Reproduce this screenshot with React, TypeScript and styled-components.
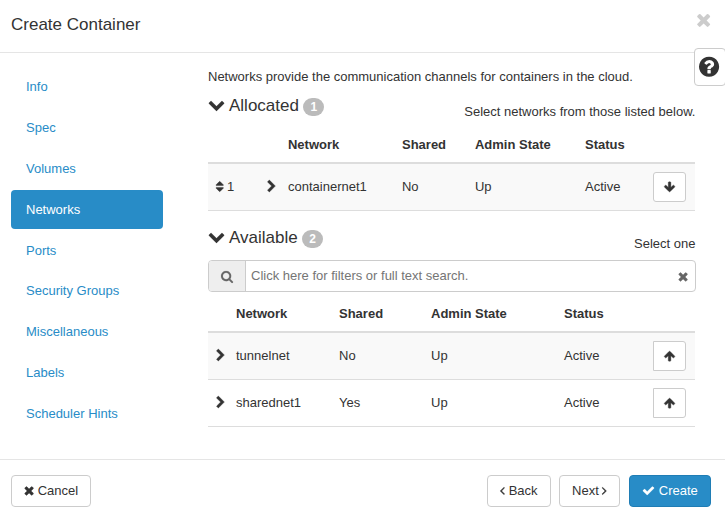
import React from 'react';
import styled, { createGlobalStyle, css } from 'styled-components';

const GlobalStyle = createGlobalStyle`
  *, *::before, *::after { box-sizing: border-box; }
  body {
    margin: 0;
    background: #fff;
    color: #333;
    font: 13px/18px "Liberation Sans", Arial, sans-serif;
    overflow: hidden;
  }
  h3, p { margin: 0; font-weight: 400; }
  button, input { font: inherit; color: inherit; }
`;

/* Glyphs share a 1792-unit em; `w` is the advance width, centred on the em box. */
const glyphs = {
  times: { w: 1408, d: 'M1490 1322q0 40-28 68l-136 136q-28 28-68 28t-68-28l-294-294-294 294q-28 28-68 28t-68-28l-136-136q-28-28-28-68t28-68l294-294-294-294q-28-28-28-68t28-68l136-136q28-28 68-28t68 28l294 294 294-294q28-28 68-28t68 28l136 136q28 28 28 68t-28 68l-294 294 294 294q28 28 28 68z' },
  search: { w: 1664, d: 'M1216 832q0-185-131.5-316.5t-316.5-131.5-316.5 131.5-131.5 316.5 131.5 316.5 316.5 131.5 316.5-131.5 131.5-316.5zm512 832q0 52-38 90t-90 38q-54 0-90-38l-343-342q-179 124-399 124-143 0-273.5-55.5t-225-150-150-225-55.5-273.5 55.5-273.5 150-225 225-150 273.5-55.5 273.5 55.5 225 150 150 225 55.5 273.5q0 220-124 399l343 343q37 37 37 90z' },
  check: { w: 1792, d: 'M1671 566q0 40-28 68l-724 724-136 136q-28 28-68 28t-68-28l-136-136-362-362q-28-28-28-68t28-68l136-136q28-28 68-28t68 28l294 295 656-657q28-28 68-28t68 28l136 136q28 28 28 68z' },
  angleLeft: { w: 640, d: 'M1203 544q0 13-10 23l-393 393 393 393q10 10 10 23t-10 23l-50 50q-10 10-23 10t-23-10l-466-466q-10-10-10-23t10-23l466-466q10-10 23-10t23 10l50 50q10 10 10 23z' },
  angleRight: { w: 640, d: 'M1171 960q0 13-10 23l-466 466q-10 10-23 10t-23-10l-50-50q-10-10-10-23t10-23l393-393-393-393q-10-10-10-23t10-23l50-50q10-10 23-10t23 10l466 466q10 10 10 23z' },
  chevronRight: { w: 1280, d: 'M1363 877l-742 742q-19 19-45 19t-45-19l-166-166q-19-19-19-45t19-45l531-531-531-531q-19-19-19-45t19-45l166-166q19-19 45-19t45 19l742 742q19 19 19 45t-19 45z' },
  chevronDown: { w: 1792, d: 'M1683 808l-742 741q-19 19-45 19t-45-19l-742-741q-19-19-19-45.5t19-45.5l166-165q19-19 45-19t45 19l531 531 531-531q19-19 45-19t45 19l166 165q19 19 19 45.5t-19 45.5z' },
  arrowUp: { w: 1664, d: 'M1675 971q0 51-37 90l-75 75q-38 38-91 38-54 0-90-38l-294-293v704q0 52-37.5 84.5t-90.5 32.5h-128q-53 0-90.5-32.5t-37.5-84.5v-704l-294 293q-36 38-90 38t-90-38l-75-75q-38-38-38-90 0-53 38-91l651-651q35-37 90-37 54 0 91 37l651 651q37 39 37 91z' },
  arrowDown: { w: 1664, d: 'M1675 832q0 53-37 90l-651 652q-39 37-91 37-53 0-90-37l-651-652q-38-36-38-90 0-53 38-91l74-75q39-37 91-37 53 0 90 37l294 294v-704q0-52 38-90t90-38h128q52 0 90 38t38 90v704l294-294q37-37 90-37 52 0 91 37l75 75q37 39 37 91z' },
  help: { w: 1536, d: 'M1024 1376v-192q0-14-9-23t-23-9h-192q-14 0-23 9t-9 23v192q0 14 9 23t23 9h192q14 0 23-9t9-23zm256-672q0-88-55.5-163t-138.5-116-170-41q-243 0-371 213-15 24 8 42l132 100q7 6 19 6 16 0 25-12 53-68 86-92 34-24 86-24 48 0 85.5 26t37.5 59q0 38-20 61t-68 45q-63 28-115.5 86.5t-52.5 125.5v36q0 14 9 23t23 9h192q14 0 23-9t9-23q0-19 21.5-49.5t54.5-49.5q32-18 49-28.5t46-35 44.5-48 28-60.5 12.5-81zm384 192q0 209-103 385.5t-279.5 279.5-385.5 103-385.5-103-279.5-279.5-103-385.5 103-385.5 279.5-279.5 385.5-103 385.5 103 279.5 279.5 103 385.5z' },
  sort: { w: 1024, d: 'M1408 1088q0 26-19 45l-448 448q-19 19-45 19t-45-19l-448-448q-19-19-19-45t19-45 45-19h896q26 0 45 19t19 45zm0-384q0 26-19 45t-45 19h-896q-26 0-45-19t-19-45 19-45l448-448q19-19 45-19t45 19l448 448q19 19 19 45z' },
};

const Glyph = styled.svg<{ $size: number; $w: number; $lift: number; $weight: number }>`
  display: block;
  flex: none;
  height: ${p => p.$size}px;
  width: ${p => (p.$size * p.$w) / 1792}px;
  margin-bottom: ${p => p.$lift * 2}px;
  overflow: visible;
  fill: currentColor;
  stroke: currentColor;
  stroke-width: ${p => p.$weight};
`;

interface IconProps {
  name: keyof typeof glyphs;
  size?: number;
  lift?: number;
  weight?: number;
}

function Icon({ name, size = 13, lift = 0, weight = 60 }: IconProps) {
  const { w, d } = glyphs[name];
  return (
    <Glyph
      $size={size}
      $w={w}
      $lift={lift}
      $weight={weight}
      viewBox={`${(1792 - w) / 2} 0 ${w} 1792`}
      aria-hidden="true"
    >
      <path d={d} />
    </Glyph>
  );
}

const Dialog = styled.div`
  display: flex;
  flex-direction: column;
  width: 725px;
  height: 521px;
  overflow: hidden;
`;

const Header = styled.header`
  display: flex;
  justify-content: space-between;
  height: 53px;
  padding: 10px 14px 0 11px;
  border-bottom: 1px solid #e5e5e5;
`;

const Title = styled.h3`
  padding-top: 3px;
  font-size: 17px;
  line-height: 24px;
`;

const Close = styled.button`
  align-self: flex-start;
  padding: 0;
  border: 0;
  background: none;
  color: #ccc;
`;

const HelpButton = styled.button`
  position: absolute;
  top: 48px;
  left: 694px;
  display: flex;
  align-items: center;
  justify-content: center;
  width: 32px;
  height: 38px;
  padding: 0 1px 0 0;
  border: 1px solid #ccc;
  border-radius: 4px;
  background: #fff;
`;

const Body = styled.div`
  display: flex;
  height: 406px;
`;

const Nav = styled.nav`
  display: flex;
  flex-direction: column;
  gap: 2px;
  width: 163px;
  padding: 14.4px 0 0 11px;
`;

const NavItem = styled.a<{ $active?: boolean }>`
  flex: none;
  height: 38.85px;
  padding: 10.85px 15px 9px;
  border-radius: 4px;
  color: #288cc7;
  ${p => p.$active && css`
    background: #288cc7;
    color: #fff;
  `}
`;

const Content = styled.main`
  width: 488px;
  margin-left: 45px;
  padding-top: 15px;
`;

const SectionHead = styled.div<{ $top: number; $height: number }>`
  display: flex;
  justify-content: space-between;
  height: ${p => p.$height}px;
  width: 487.5px;
  margin-top: ${p => p.$top}px;
`;

const SectionTitle = styled.h3`
  display: flex;
  align-items: center;
  gap: 4px;
  height: 20px;
  font-size: 17px;
  line-height: 20px;
`;

const Badge = styled.span`
  height: 18px;
  margin: 2px 0 0 0.5px;
  padding: 0 7px;
  border-radius: 9px;
  background: #bbb;
  color: #fff;
  font-size: 12px;
  font-weight: 700;
  line-height: 18px;
`;

const Hint = styled.p`
  padding-top: 7px;
`;

const SearchBar = styled.div`
  display: flex;
  align-items: center;
  height: 32px;
  padding-right: 7px;
  border: 1px solid #ccc;
  border-radius: 4px;
  color: #666;
`;

const SearchAddon = styled.span`
  display: flex;
  align-items: center;
  justify-content: center;
  align-self: stretch;
  width: 37px;
  border-right: 1px solid #ccc;
  border-radius: 3px 0 0 3px;
  background: #eee;
`;

const SearchInput = styled.input`
  flex: 1;
  height: 28px;
  padding: 0 5px 2px;
  border: 0;
  outline: 0;
  background: none;
  &::placeholder { color: #757575; opacity: 1; }
`;

const Table = styled.div`
  width: 487px;
`;

const Row = styled.div<{ $cols: string; $shaded?: boolean }>`
  display: grid;
  grid-template-columns: ${p => p.$cols};
  align-items: center;
  height: 47px;
  border-bottom: 1px solid #ddd;
  background: ${p => (p.$shaded ? '#f9f9f9' : '#fff')};
`;

const HeadRow = styled(Row)<{ $height: number }>`
  align-items: end;
  height: ${p => p.$height}px;
  padding-bottom: 8px;
  border-bottom-width: 2px;
  font-weight: 700;
`;

const IconCell = styled.span`
  display: flex;
  align-items: center;
  gap: 3.6px;
`;

const MoveButton = styled.button<{ $joined?: boolean }>`
  display: flex;
  align-items: center;
  justify-content: center;
  width: 33px;
  height: 30px;
  padding: 0;
  border: 1px solid #ccc;
  border-radius: ${p => (p.$joined ? '0 3px 3px 0' : '3px')};
  background: #fff;
`;

const Footer = styled.footer`
  display: flex;
  justify-content: space-between;
  height: 62px;
  padding: 15px 14px 0 11px;
  border-top: 1px solid #e5e5e5;
`;

const Actions = styled.div`
  display: flex;
  gap: 8px;
`;

const Button = styled.button<{ $width: number; $primary?: boolean }>`
  display: flex;
  align-items: center;
  justify-content: center;
  gap: 3.6px;
  width: ${p => p.$width}px;
  height: 32px;
  padding: 0;
  border: 1px solid #ccc;
  border-radius: 4px;
  background: #fff;
  ${p => p.$primary && css`
    margin-left: 1px;
    border-color: #1f7db5;
    background: #288cc7;
    color: #fff;
  `}
`;

const steps = ['Info', 'Spec', 'Volumes', 'Networks', 'Ports', 'Security Groups', 'Miscellaneous', 'Labels', 'Scheduler Hints'];

const allocatedCols = '8px 51.4px 20.6px 114px 73px 110px 68px 33px';
const availableCols = '8px 20px 103px 92px 133px 89px 33px';

const available = [
  { name: 'tunnelnet', shared: 'No' },
  { name: 'sharednet1', shared: 'Yes' },
];

export default function App() {
  return (
    <>
      <GlobalStyle />
      <Dialog>
        <Header>
          <Title>Create Container</Title>
          <Close aria-label="Close"><Icon name="times" size={19.5} weight={0} /></Close>
        </Header>
        <HelpButton aria-label="Help"><Icon name="help" size={23.5} weight={0} /></HelpButton>

        <Body>
          <Nav>
            {steps.map(s => <NavItem key={s} $active={s === 'Networks'}>{s}</NavItem>)}
          </Nav>
          <Content>
            <p>Networks provide the communication channels for containers in the cloud.</p>

            <SectionHead $top={10} $height={30}>
              <SectionTitle><Icon name="chevronDown" size={17} lift={1.5} weight={20} />Allocated <Badge>1</Badge></SectionTitle>
              <Hint>Select networks from those listed below.</Hint>
            </SectionHead>
            <Table>
              <HeadRow $cols={allocatedCols} $height={38}>
                <span /><span /><span />
                <span>Network</span><span>Shared</span><span>Admin State</span><span>Status</span>
              </HeadRow>
              <Row $cols={allocatedCols} $shaded>
                <span />
                <IconCell><Icon name="sort" lift={0.5} />1</IconCell>
                <IconCell><Icon name="chevronRight" lift={0.5} /></IconCell>
                <span>containernet1</span><span>No</span><span>Up</span><span>Active</span>
                <MoveButton aria-label="Deallocate"><Icon name="arrowDown" size={12} /></MoveButton>
              </Row>
            </Table>

            <SectionHead $top={17} $height={32}>
              <SectionTitle><Icon name="chevronDown" size={17} lift={1.5} weight={20} />Available <Badge>2</Badge></SectionTitle>
              <Hint>Select one</Hint>
            </SectionHead>
            <SearchBar>
              <SearchAddon><Icon name="search" weight={20} /></SearchAddon>
              <SearchInput placeholder="Click here for filters or full text search." />
              <Icon name="times" />
            </SearchBar>
            <Table>
              <HeadRow $cols={availableCols} $height={41}>
                <span /><span />
                <span>Network</span><span>Shared</span><span>Admin State</span><span>Status</span>
              </HeadRow>
              {available.map((n, i) => (
                <Row key={n.name} $cols={availableCols} $shaded={i % 2 === 0}>
                  <span />
                  <IconCell><Icon name="chevronRight" lift={1} /></IconCell>
                  <span>{n.name}</span><span>{n.shared}</span><span>Up</span><span>Active</span>
                  <MoveButton $joined aria-label="Allocate"><Icon name="arrowUp" size={12} /></MoveButton>
                </Row>
              ))}
            </Table>
          </Content>
        </Body>

        <Footer>
          <Button $width={80}><Icon name="times" lift={0.5} />Cancel</Button>
          <Actions>
            <Button $width={64}><Icon name="angleLeft" lift={0.5} />Back</Button>
            <Button $width={61}>Next<Icon name="angleRight" lift={0.5} /></Button>
            <Button $width={82} $primary><Icon name="check" lift={0.5} weight={20} />Create</Button>
          </Actions>
        </Footer>
      </Dialog>
    </>
  );
}
